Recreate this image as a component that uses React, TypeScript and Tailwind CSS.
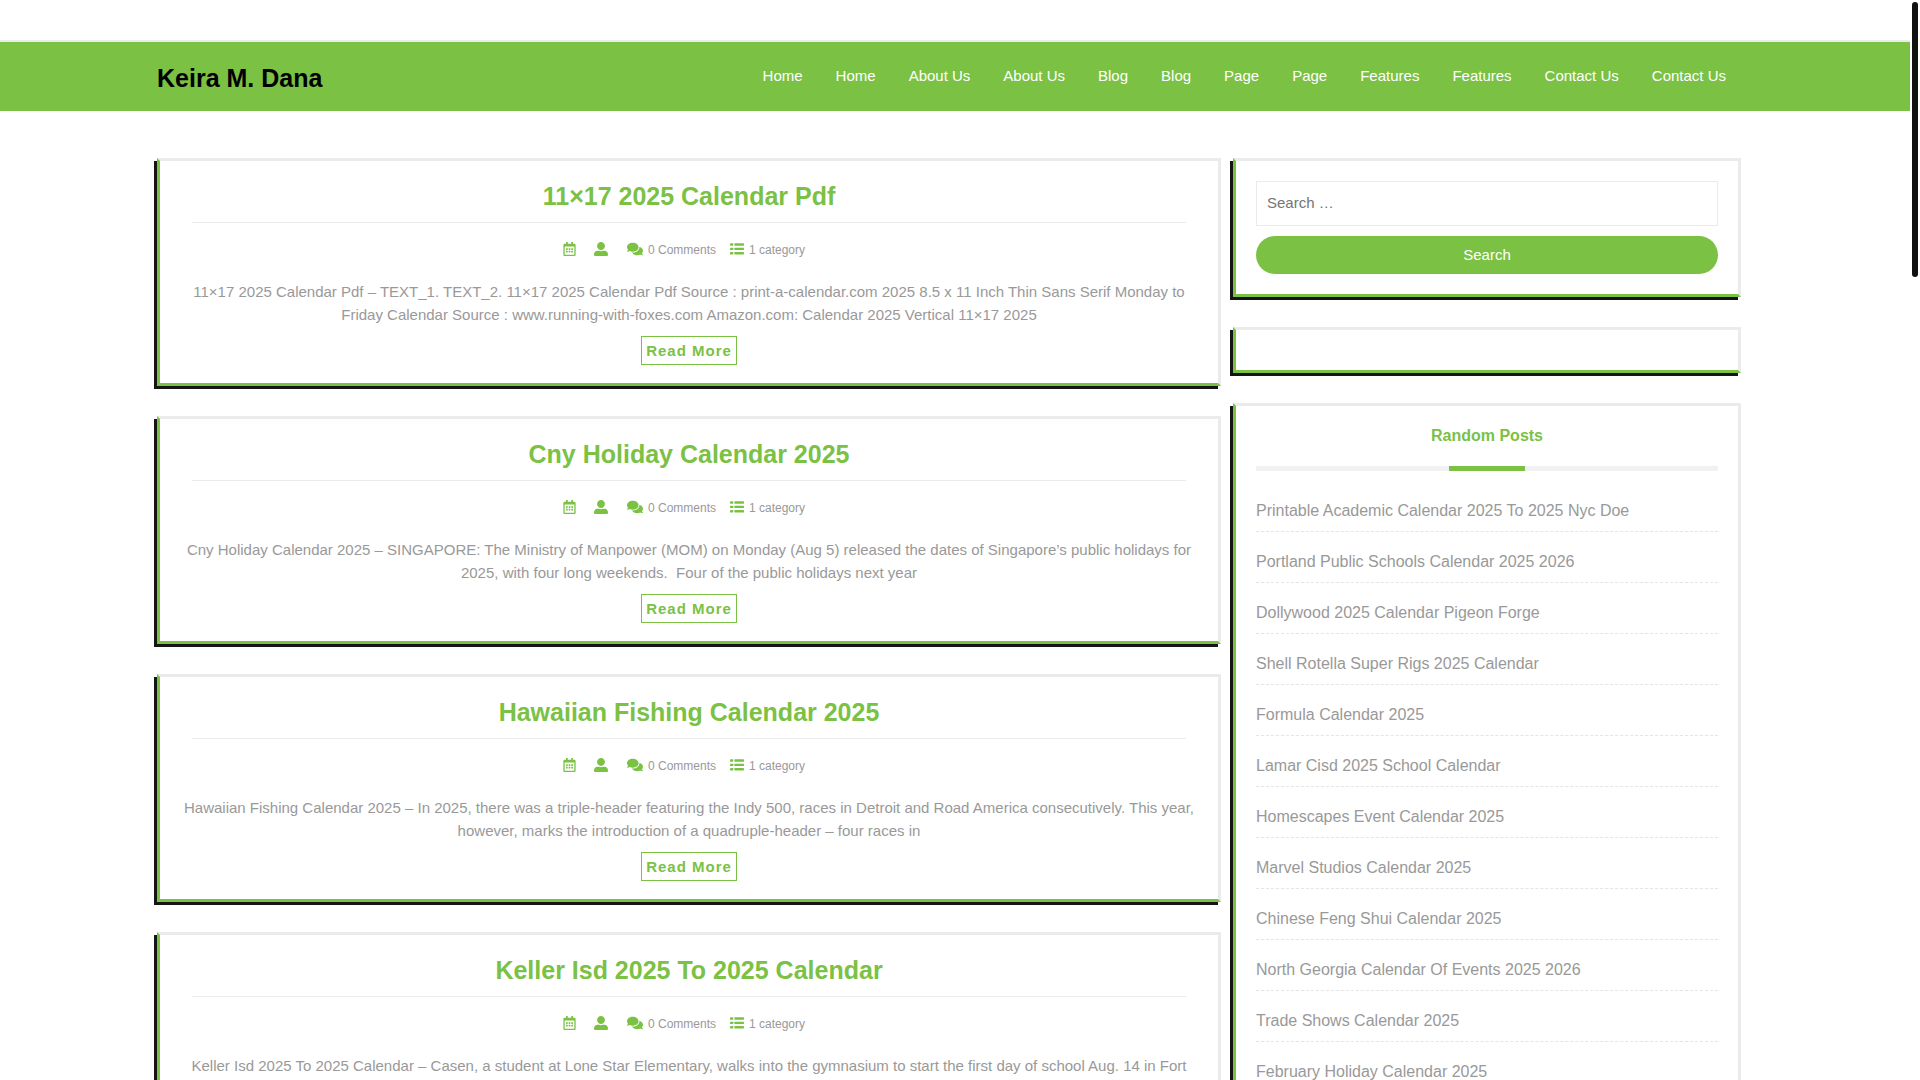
import React from "react";
import { FaComments, FaRegCalendarAlt, FaUserAlt } from "react-icons/fa";

interface Post {
  title: string;
  excerpt: string;
}

const NAV_LINKS = [
  "Home",
  "Home",
  "About Us",
  "About Us",
  "Blog",
  "Blog",
  "Page",
  "Page",
  "Features",
  "Features",
  "Contact Us",
  "Contact Us",
];

const POSTS: Post[] = [
  {
    title: "11×17 2025 Calendar Pdf",
    excerpt:
      "11×17 2025 Calendar Pdf – TEXT_1. TEXT_2. 11×17 2025 Calendar Pdf Source : print-a-calendar.com 2025 8.5 x 11 Inch Thin Sans Serif Monday to Friday Calendar Source : www.running-with-foxes.com Amazon.com: Calendar 2025 Vertical 11×17 2025",
  },
  {
    title: "Cny Holiday Calendar 2025",
    excerpt:
      "Cny Holiday Calendar 2025 – SINGAPORE: The Ministry of Manpower (MOM) on Monday (Aug 5) released the dates of Singapore’s public holidays for 2025, with four long weekends.\u00a0 Four of the public holidays next year",
  },
  {
    title: "Hawaiian Fishing Calendar 2025",
    excerpt:
      "Hawaiian Fishing Calendar 2025 – In 2025, there was a triple-header featuring the Indy 500, races in Detroit and Road America consecutively. This year, however, marks the introduction of a quadruple-header – four races in",
  },
  {
    title: "Keller Isd 2025 To 2025 Calendar",
    excerpt:
      "Keller Isd 2025 To 2025 Calendar – Casen, a student at Lone Star Elementary, walks into the gymnasium to start the first day of school Aug. 14 in Fort",
  },
];

const RANDOM_POSTS = [
  "Printable Academic Calendar 2025 To 2025 Nyc Doe",
  "Portland Public Schools Calendar 2025 2026",
  "Dollywood 2025 Calendar Pigeon Forge",
  "Shell Rotella Super Rigs 2025 Calendar",
  "Formula Calendar 2025",
  "Lamar Cisd 2025 School Calendar",
  "Homescapes Event Calendar 2025",
  "Marvel Studios Calendar 2025",
  "Chinese Feng Shui Calendar 2025",
  "North Georgia Calendar Of Events 2025 2026",
  "Trade Shows Calendar 2025",
  "February Holiday Calendar 2025",
];

const BOX =
  "border-[3px] border-t-[#ebebeb] border-r-[#ebebeb] border-b-[#7ac144] border-l-[#7ac144] shadow-[-3px_3px_0_#151515]";

const ListIcon: React.FC<{ className?: string }> = ({ className }) => (
  <svg
    className={className}
    viewBox="0 0 512 512"
    fill="currentColor"
    aria-hidden="true"
  >
    {[48, 208, 368].map((y) => (
      <g key={y}>
        <rect x="0" y={y} width="120" height="88" rx="16" />
        <rect x="160" y={y} width="352" height="88" rx="16" />
      </g>
    ))}
  </svg>
);

const PostCard: React.FC<{ post: Post }> = ({ post }) => (
  <article className={`${BOX} px-4 pt-5 pb-[18px] text-center`}>
    <h2 className="mx-4 border-b border-[#ebebeb] pb-[11px] text-[25px] leading-[30px] font-bold">
      <a href="#" className="text-[#7ac144]">
        {post.title}
      </a>
    </h2>
    <div className="mt-3.5 flex h-6 items-center justify-center text-xs">
      <FaRegCalendarAlt className="mr-[18px] h-3.5 w-[13px] text-[#7ac144]" />
      <FaUserAlt className="mr-[19px] size-3.5 text-[#7ac144]" />
      <FaComments className="mr-[5px] size-4 text-[#7ac144]" />
      <span className="mr-3.5 pt-0.5">0 Comments</span>
      <ListIcon className="mr-[5px] size-3.5 text-[#7ac144]" />
      <span className="mr-2.5 pt-0.5">1 category</span>
    </div>
    <p className="mt-[19px] text-[15px] leading-[23px]">{post.excerpt}</p>
    <div className="mt-2.5 flex justify-center">
      <a
        href="#"
        className="border border-[#7ac144] px-1 py-0.5 text-[15px] leading-[23px] font-bold tracking-[1px] text-[#7ac144]"
      >
        Read More
      </a>
    </div>
  </article>
);

const Sidebar: React.FC = () => (
  <aside className="flex flex-col gap-[30px]">
    <form
      role="search"
      className={`${BOX} flex flex-col gap-2.5 p-5`}
      onSubmit={(e) => e.preventDefault()}
    >
      <input
        type="search"
        aria-label="Search for:"
        placeholder="Search …"
        className="h-[45px] w-full border border-[#ebebeb] px-2.5 pb-0.5 text-[15px] placeholder:text-[#757575]"
      />
      <button
        type="submit"
        className="h-[38px] w-full rounded-full bg-[#7ac144] text-[15px] text-white"
      >
        Search
      </button>
    </form>

    <section className={`${BOX} p-5`} />

    <section className={`${BOX} px-5 pt-[18px] pb-5`}>
      <h3 className="text-center text-base leading-6 font-bold text-[#7ac144]">
        Random Posts
      </h3>
      <div className="mt-[18px] flex h-[5px] justify-center bg-[#f1f1f1]">
        <span className="w-1/6 bg-[#7ac144]" />
      </div>
      <ul className="mt-2.5">
        {RANDOM_POSTS.map((title) => (
          <li
            key={title}
            className="border-b border-dashed border-[#e5e5e5] pt-[18px] pb-2 text-base leading-6"
          >
            <a href="#">{title}</a>
          </li>
        ))}
      </ul>
    </section>
  </aside>
);

export default function App() {
  return (
    <div className="flex h-screen overflow-hidden bg-white font-['Liberation_Sans',Arial,sans-serif] text-[#999]">
      <div className="min-w-0 flex-1 overflow-hidden">
        <header className="mt-10 flex items-center justify-between border-t-2 border-[#ebebeb] bg-[#7ac144] pr-[184px] pl-[157px]">
          <h1 className="pt-[22px] pb-[18px] text-[25px] leading-[29px] font-bold text-black">
            <a href="#">Keira M. Dana</a>
          </h1>
          <nav className="flex gap-[33px] pb-0.5 text-[15px] leading-6 text-white">
            {NAV_LINKS.map((label, idx) => (
              <a key={idx} href="#">
                {label}
              </a>
            ))}
          </nav>
        </header>

        <div className="grid grid-cols-[minmax(0,1fr)_508px] gap-3 pt-[47px] pr-[169px] pl-[157px]">
          <main className="flex flex-col gap-[30px]">
            {POSTS.map((post) => (
              <PostCard key={post.title} post={post} />
            ))}
          </main>
          <Sidebar />
        </div>
      </div>

      {/* Scroll track */}
      <div className="w-2.5 px-0.5 pt-0.5">
        <div className="h-[275px] rounded-full bg-[#111]" />
      </div>
    </div>
  );
}
